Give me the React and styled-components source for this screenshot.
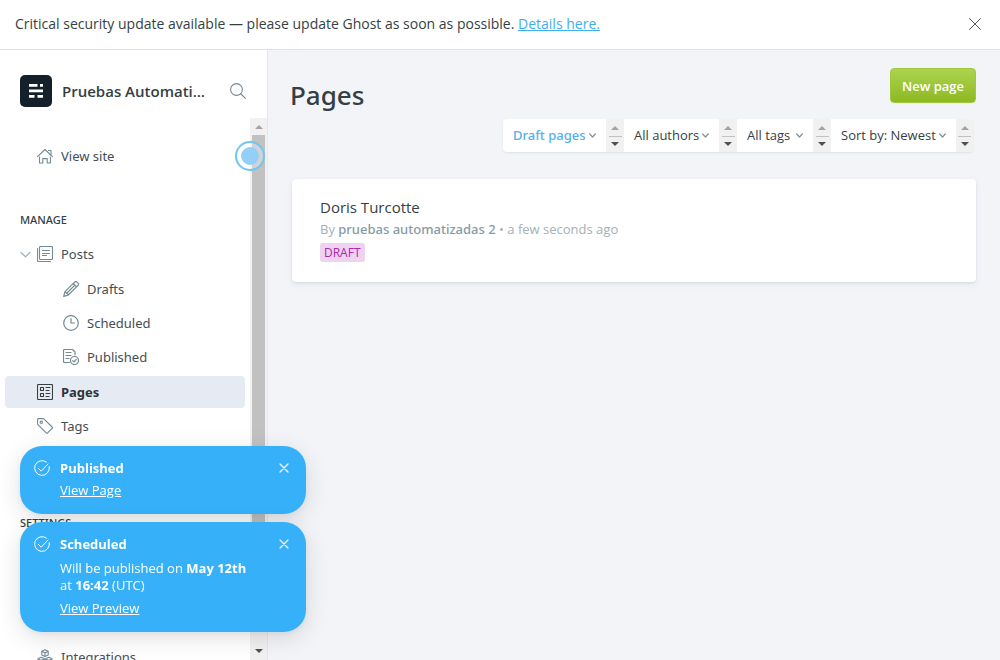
import React from 'react';
import styled, { createGlobalStyle, css } from 'styled-components';

const GlobalStyle = createGlobalStyle`
  *, *::before, *::after { box-sizing: border-box; }
  body {
    margin: 0;
    background: #f3f4f8;
    color: #343f44;
    font-family: "Open Sans", "Noto Sans", sans-serif;
    font-size: 13px;
    line-height: 18px;
  }
  h1, h2, h3, h4, p, ul { margin: 0; padding: 0; }
  ul { list-style: none; }
  a { color: inherit; }
  button { border: 0; padding: 0; background: none; color: inherit; font: inherit; cursor: pointer; }
`;

const Page = styled.div`
  display: flex;
  flex-direction: column;
  height: 100vh;
  overflow: hidden;
`;

const Banner = styled.div`
  display: flex;
  align-items: center;
  justify-content: space-between;
  flex: none;
  padding: 15px 18px 16px 15px;
  border-bottom: 1px solid #dfe1e3;
  background: #fff;
  font-size: 14px;
`;

const BannerLink = styled.a`
  color: #3eb0ef;
`;

const IconButton = styled.button`
  display: flex;
  flex: none;
  color: ${({ $color }) => $color};
`;

const Body = styled.div`
  display: flex;
  flex: 1;
  min-height: 0;
`;

const Sidebar = styled.aside`
  display: flex;
  flex-direction: column;
  flex: none;
  width: 268px;
  border-right: 1px solid #e4e8ef;
  background: #fff;
  font-family: "Noto Sans", sans-serif;
`;

const SiteHeader = styled.header`
  display: flex;
  align-items: center;
  gap: 10px;
  padding: 25px 21px 11px 20px;
`;

const SiteName = styled.h2`
  flex: 1;
  min-width: 0;
  font-family: "Open Sans", sans-serif;
  font-size: 15px;
  font-weight: 600;
  line-height: 20px;
  overflow: hidden;
  white-space: nowrap;
  text-overflow: ellipsis;
`;

const SearchButton = styled(IconButton)`
  width: 28px;
  justify-content: flex-end;
  margin-left: -4px;
`;

const NavArea = styled.div`
  position: relative;
  display: flex;
  flex: 1;
  min-height: 0;
`;

const Nav = styled.nav`
  flex: 1;
  min-width: 0;
  padding: 22px 5px 0;
  overflow: hidden;
`;

const NavHeading = styled.h4`
  padding: 0 15px;
  margin: ${({ $top }) => $top}px 0 10px;
  font-size: 11px;
  font-weight: 500;
  line-height: 16px;
  text-transform: uppercase;
`;

const FooterNav = styled.ul`
  padding-top: 100px;
`;

const rowSizes = css`
  height: ${({ $nested }) => ($nested ? 34 : 32)}px;
  padding-left: ${({ $nested }) => ($nested ? 58 : 32)}px;
`;

const NavLink = styled.a`
  display: flex;
  align-items: center;
  gap: 8px;
  flex: 1;
  ${rowSizes}
  border-radius: 4px;
  background: ${({ $active }) => ($active ? '#e6ebf3' : 'transparent')};
  color: ${({ $active }) => ($active ? '#2b353a' : '#434e54')};
  font-weight: ${({ $active }) => ($active ? 700 : 400)};
  text-decoration: none;
  svg { color: ${({ $active }) => ($active ? '#343f44' : '#738a94')}; }
`;

const NavItem = styled.li`
  position: relative;
  display: flex;
  align-items: center;
  margin-bottom: ${({ $gap = 0 }) => $gap}px;
`;

const Collapse = styled.button`
  position: absolute;
  left: 15px;
  display: flex;
  color: #9fb0b8;
`;

const ScrollTrack = styled.div`
  display: flex;
  flex-direction: column;
  align-items: center;
  justify-content: space-between;
  flex: none;
  width: 17px;
  padding: 7px 0;
  background: #f1f1f1;
`;

const ScrollThumb = styled.div`
  flex: 1;
  width: 13px;
  margin: 6px 0 58px;
  background: #c1c1c1;
`;

const Beacon = styled.button`
  position: absolute;
  top: 23px;
  right: 2px;
  display: grid;
  place-items: center;
  width: 30px;
  height: 30px;
  border: 2px solid #6fc5f3;
  border-radius: 50%;
  background: rgba(255, 255, 255, 0.3);
  &::after {
    content: '';
    width: 18px;
    height: 18px;
    border-radius: 50%;
    background: #93d0f7;
  }
`;

const Main = styled.main`
  flex: 1;
  min-width: 0;
  padding: 18px 24px 0 22px;
`;

const MainHeader = styled.header`
  display: flex;
  align-items: flex-start;
  justify-content: space-between;
  height: 51px;
`;

const Title = styled.h1`
  padding-top: 9px;
  font-family: "Noto Sans", sans-serif;
  font-size: 26px;
  font-weight: 500;
  line-height: 36px;
`;

const NewButton = styled.button`
  height: 35px;
  padding: 0 11px;
  border: 1px solid #9fc93a;
  border-radius: 4px;
  background: linear-gradient(#add350, #8db922);
  color: #fff;
  font-size: 13px;
  font-weight: 600;
`;

const Filters = styled.div`
  display: flex;
  width: fit-content;
  margin: 0 3px 27px auto;
  border-radius: 4px;
  overflow: hidden;
  background: #fff;
  box-shadow: 0 1px 2px rgba(40, 60, 80, 0.1);
`;

const Filter = styled.div`
  display: flex;
  height: 33px;
`;

const SelectBox = styled.label`
  position: relative;
  display: flex;
  align-items: center;
  width: ${({ $width }) => $width}px;
  svg { position: absolute; right: 10px; pointer-events: none; color: #7f9099; }
`;

const Select = styled.select`
  appearance: none;
  width: 100%;
  height: 100%;
  padding: 0 0 2px 10px;
  border: 0;
  background: transparent;
  color: ${({ $active }) => ($active ? '#55aeed' : '#343f44')};
  font: inherit;
  font-family: ${({ $active }) => ($active ? '"Noto Sans"' : '"Open Sans"')}, sans-serif;
  font-weight: ${({ $active }) => ($active ? 500 : 400)};
`;

const Stepper = styled.div`
  display: flex;
  flex-direction: column;
  align-items: center;
  justify-content: space-between;
  width: ${({ $last }) => ($last ? 17 : 18)}px;
  padding: 7px 0 6px;
  background: #f1f1f1;
`;

const StepperLine = styled.div`
  width: 13px;
  height: 1px;
  background: #c1c1c1;
`;

const Card = styled.article`
  margin-left: 2px;
  padding: 18px 28px 20px;
  border-radius: 4px;
  background: #fff;
  box-shadow: 0 1px 3px rgba(60, 100, 130, 0.16), 0 4px 8px rgba(60, 80, 100, 0.04);
`;

const CardTitle = styled.h3`
  font-size: 15px;
  font-weight: 500;
  line-height: 20px;
`;

const CardMeta = styled.p`
  margin: 3px 0 5px;
  color: #a3b1b8;
  font-size: 13px;
  strong { color: #869ba4; font-family: "Noto Sans", sans-serif; font-weight: 500; }
`;

const Badge = styled.span`
  display: block;
  width: fit-content;
  padding: 0 4px;
  border-radius: 3px;
  background: #eed2ee;
  color: #ad26b4;
  font-size: 12px;
  line-height: 19px;
`;

const Toasts = styled.div`
  position: fixed;
  left: 20px;
  bottom: 28px;
  display: flex;
  flex-direction: column;
  gap: 8px;
  width: 286px;
`;

const Toast = styled.section`
  display: flex;
  align-items: flex-start;
  gap: 10px;
  padding: 13px 17px 15px 14px;
  border-radius: 22px;
  background: #36b1f9;
  box-shadow: 0 6px 24px rgba(0, 0, 0, 0.12), 0 2px 6px rgba(0, 0, 0, 0.05);
  color: #fff;
`;

const ToastIcon = styled.span`
  display: flex;
  padding-top: 1px;
`;

const ToastContent = styled.div`
  flex: 1;
`;

const ToastTitle = styled.h3`
  font-size: 13px;
  font-weight: 700;
  line-height: 18px;
`;

const ToastMessage = styled.p`
  max-width: 200px;
  margin: 7px 0 5px;
  line-height: 17px;
`;

const ToastLink = styled.a`
  display: block;
  width: fit-content;
  margin-top: 4px;
`;

const Dismiss = styled(IconButton)`
  align-items: center;
  height: 18px;
`;

const Svg = ({ size = 16, box = 16, children, width = 1 }) => (
  <svg width={size} height={size} viewBox={`0 0 ${box} ${box}`} fill="none" stroke="currentColor"
    strokeWidth={width} strokeLinecap="round" strokeLinejoin="round" aria-hidden="true">
    {children}
  </svg>
);

const Logo = () => (
  <svg width="32" height="32" viewBox="0 0 32 32" role="img" aria-label="Site icon">
    <rect width="32" height="32" rx="5" fill="#15212a" />
    <path d="M9 9h8.500v2.700H9zM20 9h3v2.700h-3zM9 14.600h14v2.700H9zM9 20h5.500v2.700H9zM17.500 20H23v2.700h-5.500z" fill="#fff" />
  </svg>
);

const icons = {
  home: <><path d="M.6 8.600 8 1.500l7.400 7.100M11.500 2.500H14v4.300M2.500 9v6h3.300v-4.400h4.400V15h3.300V9" /></>,
  posts: <><rect x="2.500" y=".5" width="13" height="13" rx="1" /><path d="M.5 2.500v12a1 1 0 0 0 1 1h12M5.500 4.500h7M5.500 7.500h7M5.500 9.500h4" /></>,
  pencil: <><path d="M.7 15.300 2 10.700 11.600 1.100a1.700 1.700 0 0 1 2.500 0l.8.8a1.700 1.700 0 0 1 0 2.500L5.300 14zM2 10.700 5.300 14M10.200 2.500l3.300 3.300M4 12l7.600-7.600" /></>,
  clock: <><circle cx="8" cy="8" r="7.300" /><path d="M8 3.500V8h3.500" /></>,
  published: <><path d="M6.500 13.500h-5a1 1 0 0 1-1-1v-11a1 1 0 0 1 1-1h8l2.500 2.500v3M3 3.500h5M3 6.500h5M3 9.500h3" /><circle cx="11.500" cy="11.500" r="4" /><path d="m9.700 11.700 1.300 1.200 2.200-2.600" /></>,
  pages: <><rect x=".5" y=".5" width="15" height="15" rx="1" /><path d="M3.500 3.500h3v3h-3zM3.500 9.500h3v3h-3zM9 3.500h4M9 6.500h3M9 9.500h4M9 12.500h3" /></>,
  tag: <><path d="M.6 1.600v4.700l8.600 8.600a1 1 0 0 0 1.400 0l4.500-4.500a1 1 0 0 0 0-1.400L6.500.6H1.600a1 1 0 0 0-1 1z" /><circle cx="4.300" cy="4.300" r="1.200" /></>,
  integrations: <><path d="m8 .7 3.200 1.600v3.600L8 7.500 4.800 5.900V2.300zM4.800 2.300 8 3.900l3.200-1.600M8 3.900v3.600M4.200 8.200l3.200 1.600v3.600L4.200 15 1 13.400V9.800zM1 9.800l3.200 1.600 3.200-1.600M4.200 11.400V15M11.800 8.200 15 9.800v3.600L11.800 15l-3.200-1.600V9.800zM8.600 9.800l3.200 1.600L15 9.800M11.800 11.400V15" /></>,
};

const Close = ({ size }) => (
  <Svg size={size} box={14}><path d="m1.500 1.500 11 11M12.500 1.500l-11 11" /></Svg>
);

const Arrow = ({ down, muted }) => (
  <svg width="8" height="4" viewBox="0 0 8 4" aria-hidden="true">
    <path d={down ? 'M0 0h8L4 4z' : 'M0 4h8L4 0z'} fill={muted ? '#a3a3a3' : '#505050'} />
  </svg>
);

const Item = ({ icon, label, gap, nested, active, collapsible }) => (
  <NavItem $gap={gap}>
    <NavLink href="#" $nested={nested} $active={active} aria-current={active ? 'page' : undefined}>
      <Svg width={nested ? 1.2 : 1.1}>{icons[icon]}</Svg>
      {label}
    </NavLink>
    {collapsible && (
      <Collapse aria-label="Collapse posts">
        <Svg size={11} box={11} width={1.2}><path d="m1 3.500 4.500 4.300L10 3.500" /></Svg>
      </Collapse>
    )}
  </NavItem>
);

const filters = [
  { label: 'Draft pages', width: 103, name: 'Type', active: true },
  { label: 'All authors', width: 95, name: 'Author' },
  { label: 'All tags', width: 76, name: 'Tag' },
  { label: 'Sort by: Newest', width: 125, name: 'Order' },
];

const Notification = ({ title, link, children }) => (
  <Toast>
    <ToastIcon>
      <Svg><path d="M15.300 6.700A7.400 7.400 0 1 1 12.500 2.100M4.500 8.500l2.700 2.700L14 4" /></Svg>
    </ToastIcon>
    <ToastContent>
      <ToastTitle>{title}</ToastTitle>
      {children && <ToastMessage>{children}</ToastMessage>}
      <ToastLink href="#">{link}</ToastLink>
    </ToastContent>
    <Dismiss $color="#fff" aria-label="Dismiss">
      <Svg size={10} box={10} width={1.2}><path d="m1 1 8 8M9 1 1 9" /></Svg>
    </Dismiss>
  </Toast>
);

export default function App() {
  return (
    <Page>
      <GlobalStyle />
      <Banner role="alert">
        <p>
          Critical security update available — please update Ghost as soon as possible.{' '}
          <BannerLink href="#">Details here.</BannerLink>
        </p>
        <IconButton $color="#4c5960" aria-label="Close"><Close size={14} /></IconButton>
      </Banner>
      <Body>
        <Sidebar>
          <SiteHeader>
            <Logo />
            <SiteName>Pruebas Automatizadas</SiteName>
            <SearchButton $color="#738a94" aria-label="Search">
              <Svg width={1.1}><circle cx="6.500" cy="6.500" r="5.900" /><path d="m11 11 4.400 4.400" /></Svg>
            </SearchButton>
          </SiteHeader>
          <NavArea>
            <Nav>
              <ul><Item icon="home" label="View site" /></ul>
              <NavHeading $top={40}>Manage</NavHeading>
              <ul>
                <Item icon="posts" label="Posts" gap={2} collapsible />
                <Item icon="pencil" label="Drafts" nested />
                <Item icon="clock" label="Scheduled" nested />
                <Item icon="published" label="Published" gap={2} nested />
                <Item icon="pages" label="Pages" gap={2} active />
                <Item icon="tag" label="Tags" />
              </ul>
              <NavHeading $top={73}>Settings</NavHeading>
              <FooterNav>
                <Item icon="integrations" label="Integrations" />
              </FooterNav>
            </Nav>
            <ScrollTrack aria-hidden="true">
              <Arrow muted />
              <ScrollThumb />
              <Arrow down />
            </ScrollTrack>
            <Beacon aria-label="Open hint" />
          </NavArea>
        </Sidebar>
        <Main>
          <MainHeader>
            <Title>Pages</Title>
            <NewButton>New page</NewButton>
          </MainHeader>
          <Filters>
            {filters.map(({ label, width, name, active }, i) => (
              <Filter key={name}>
                <SelectBox $width={width}>
                  <Select $active={active} aria-label={name}><option>{label}</option></Select>
                  <Svg size={7} box={7} width={1.2}><path d="m.7 2 2.800 3 2.800-3" /></Svg>
                </SelectBox>
                <Stepper $last={i === filters.length - 1} aria-hidden="true">
                  <Arrow muted /><StepperLine /><Arrow down />
                </Stepper>
              </Filter>
            ))}
          </Filters>
          <Card>
            <CardTitle>Doris Turcotte</CardTitle>
            <CardMeta>By <strong>pruebas automatizadas 2</strong> • a few seconds ago</CardMeta>
            <Badge>DRAFT</Badge>
          </Card>
        </Main>
      </Body>
      <Toasts>
        <Notification title="Published" link="View Page" />
        <Notification title="Scheduled" link="View Preview">
          Will be published on <strong>May 12th</strong> at <strong>16:42</strong> (UTC)
        </Notification>
      </Toasts>
    </Page>
  );
}
